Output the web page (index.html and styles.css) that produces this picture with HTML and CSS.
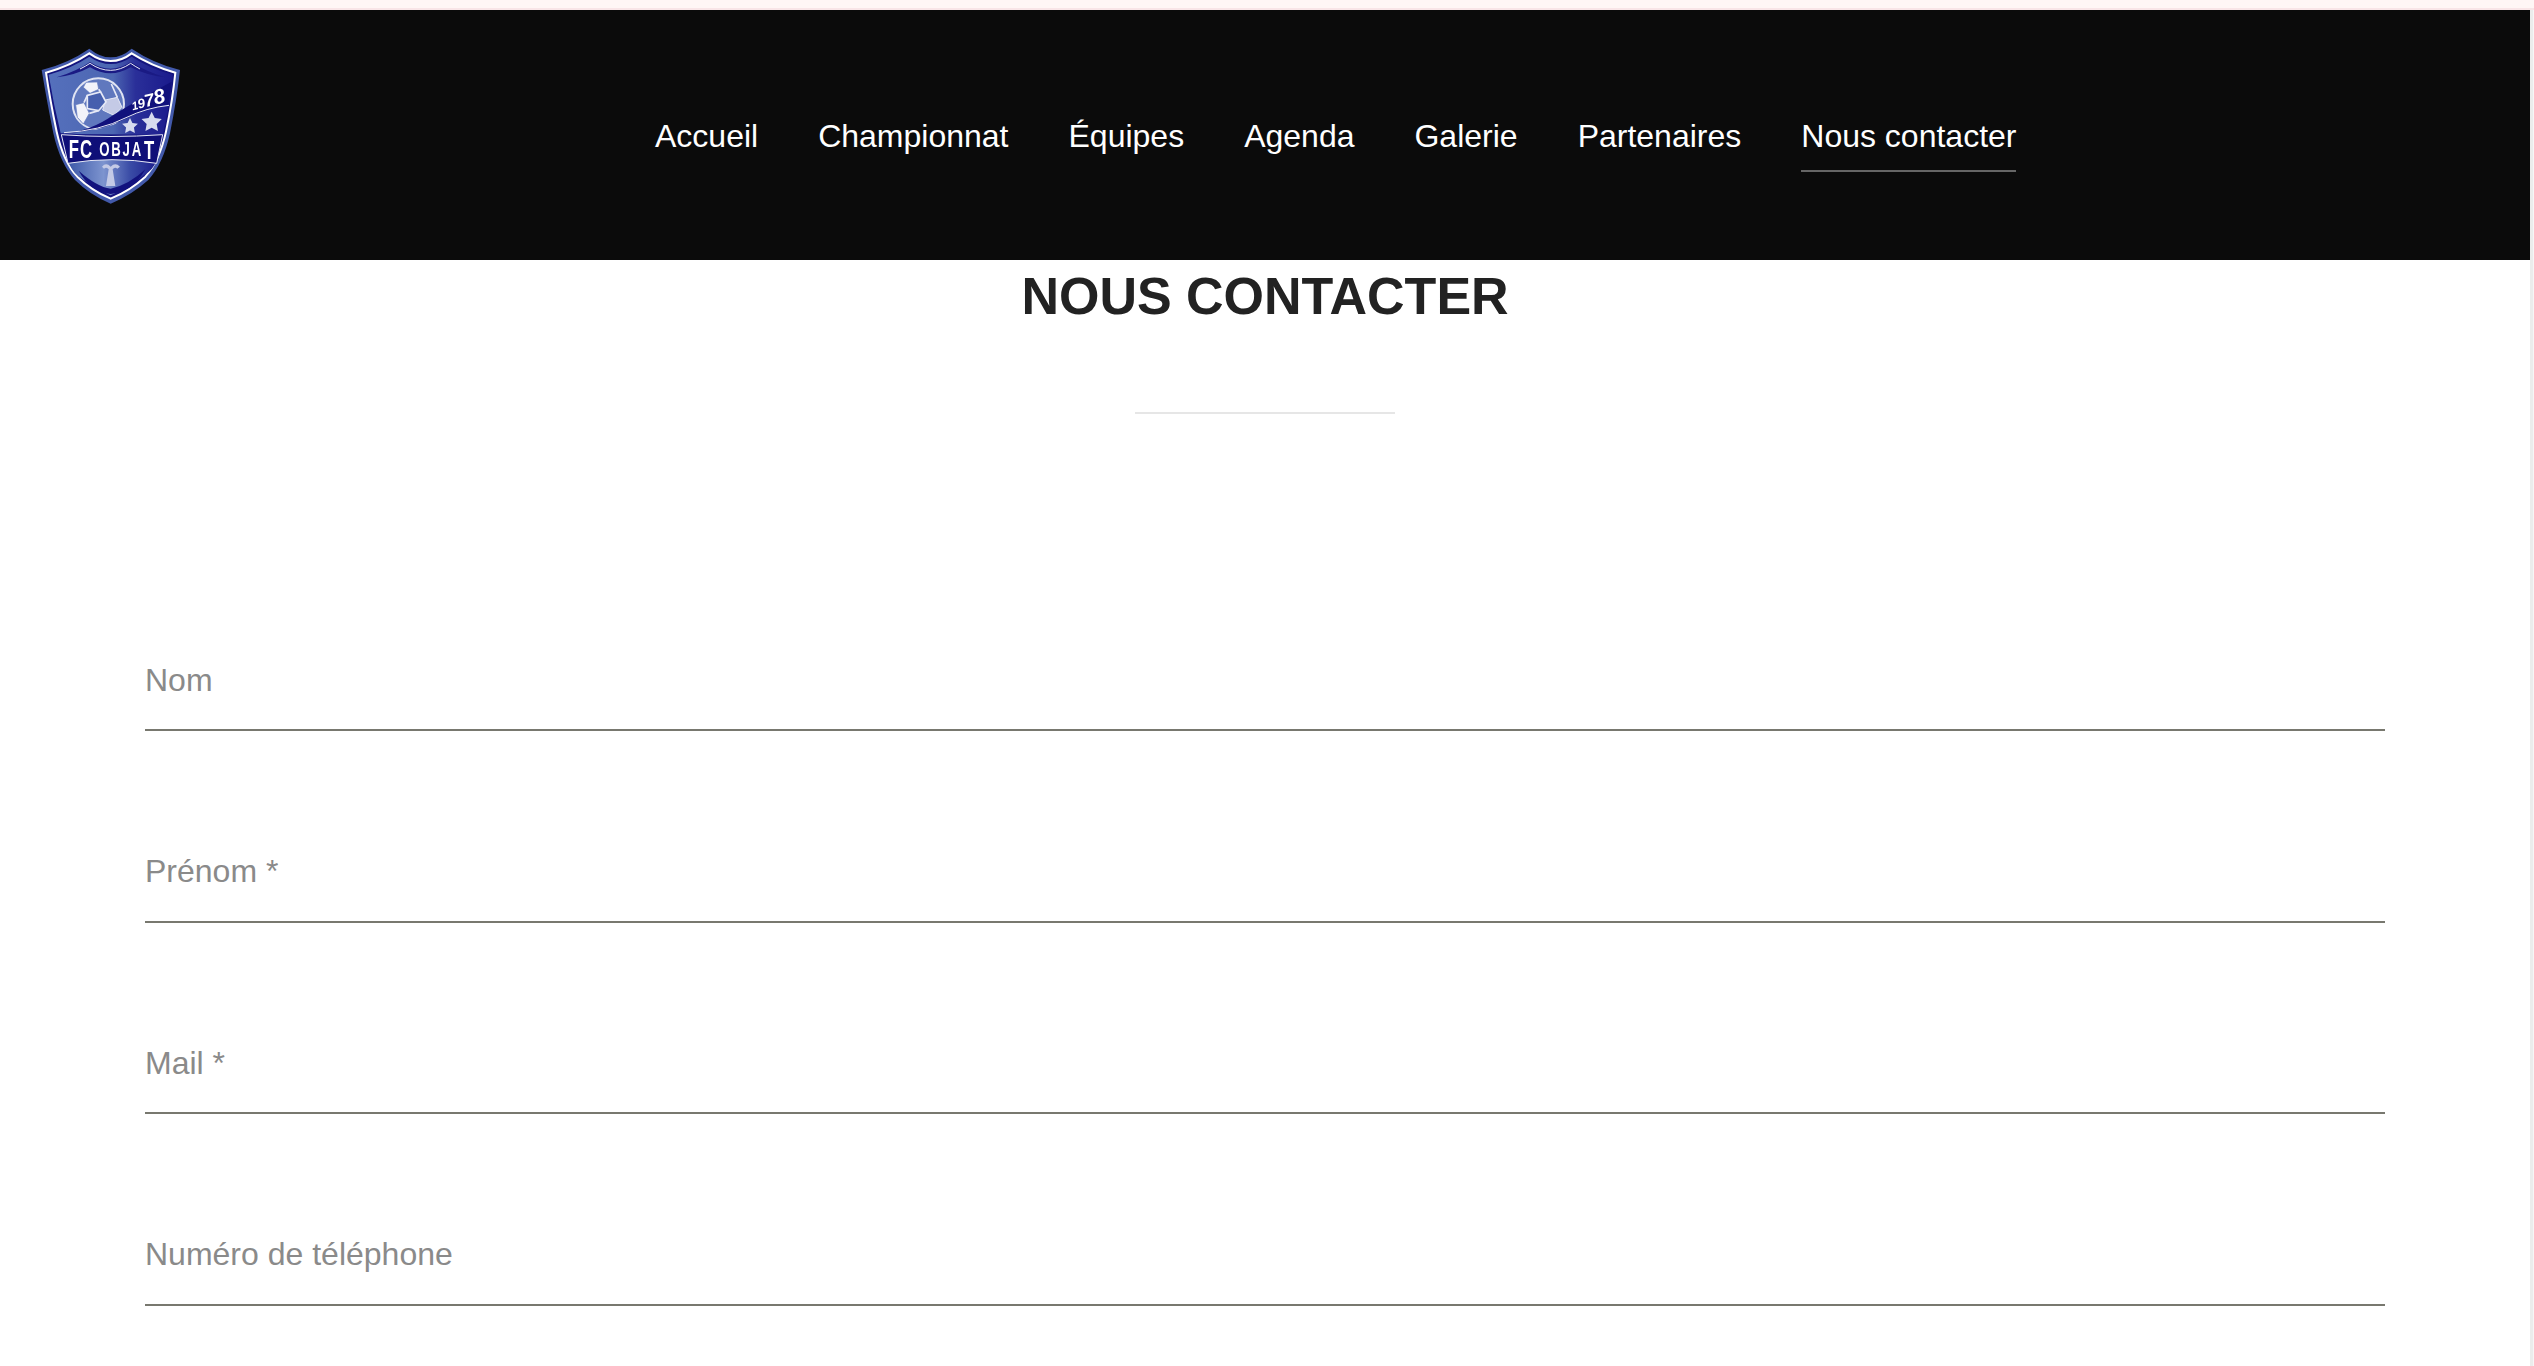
FILE: index.html
```html
<!DOCTYPE html>
<html lang="fr">
<head>
    <meta charset="UTF-8">
    <title>Nous contacter - FC Objat</title>
    <link rel="stylesheet" href="styles.css">
</head>
<body>

<div class="top-strip"></div>

<div class="page">
    <div class="content">
        <header class="site-header">
            <a class="logo" href="#">
                <svg class="logo-img" viewBox="120 141 426 474" aria-label="FC Objat">
                    <defs>
                        <linearGradient id="fieldFill" gradientUnits="userSpaceOnUse" x1="146" y1="0" x2="518" y2="0">
                            <stop offset="0" stop-color="#5570bc"/>
                            <stop offset="0.52" stop-color="#4c66b2"/>
                            <stop offset="0.7" stop-color="#2a2f99"/>
                            <stop offset="1" stop-color="#1a1a8c"/>
                        </linearGradient>
                        <linearGradient id="footFill" gradientUnits="userSpaceOnUse" x1="204" y1="0" x2="470" y2="0">
                            <stop offset="0" stop-color="#3c58a8"/>
                            <stop offset="0.4" stop-color="#7d94cf"/>
                            <stop offset="0.7" stop-color="#3a4ca6"/>
                            <stop offset="1" stop-color="#1c1e8c"/>
                        </linearGradient>
                        <polygon id="star" points="0,-1 .29,-.4 .951,-.309 .47,.15 .588,.809 0,.5 -.588,.809 -.47,.15 -.951,-.309 -.29,-.4"/>
                    </defs>
                    <!-- shield -->
                    <path fill="#4259aa" d="M125 210 Q205 190 268 146 Q300 172 332 172 Q365 172 395 146 Q460 190 540 210 Q530 300 510 400 Q490 490 445 540 Q395 585 332 611 Q270 585 225 540 Q180 490 160 400 Q140 300 125 210Z"/>
                    <path fill="#14147e" stroke="#fff" stroke-width="6" d="M138 218 Q210 198 268 160 Q300 183 332 183 Q365 183 395 160 Q455 198 526 218 Q518 300 498 395 Q478 485 436 530 Q390 572 332 596 Q275 572 232 530 Q190 485 170 395 Q150 300 138 218Z"/>
                    <path fill="url(#fieldFill)" d="M146 224 Q212 206 268 170 Q300 192 332 192 Q365 192 395 170 Q450 206 518 224 L510 300 L488 400 L182 400 Q160 310 146 224Z"/>
                    <!-- top crescent -->
                    <path fill="#1a1a84" d="M170 232 Q230 214 270 186 Q300 206 332 206 Q362 206 392 186 Q440 215 495 232 Q440 226 392 202 Q360 220 332 220 Q300 220 270 202 Q225 226 170 232Z"/>
                    <path fill="none" stroke="#e6e9f7" stroke-width="3" d="M240 207 Q258 198 270 190 Q300 211 332 211 Q362 211 392 190 Q405 199 420 207"/>
                    <!-- ball -->
                    <circle cx="295" cy="312" r="77" fill="#6078be" stroke="#dfe3f2" stroke-width="6"/>
                    <g fill="#f2f3fa" stroke="#6078be" stroke-width="2">
                        <path d="M258 247 L292 246 L296 268 L270 280 L250 262Z"/>
                        <path d="M227 314 L252 308 L268 340 L250 372 L232 352Z"/>
                    </g>
                    <path fill="#c4cae6" stroke="#e6e9f6" stroke-width="3" d="M316 300 L352 292 L366 322 L342 346 L308 330Z"/>
                    <path fill="#465fae" stroke="#e6e9f6" stroke-width="5" d="M262 286 L302 276 L318 306 L296 332 L262 326Z"/>
                    <g fill="none" stroke="#e6e9f6" stroke-width="5">
                        <path d="M296 268 L302 276 M352 292 L334 252 M262 286 L252 308 M268 340 L296 332 M342 346 L340 385"/>
                    </g>
                    <!-- banner -->
                    <path fill="#11117c" d="M190 400 Q270 395 340 345 Q420 295 515 245 L506 316 Q440 325 380 355 Q300 395 190 400Z"/>
                    <path fill="url(#fieldFill)" d="M190 402 Q300 397 380 357 Q440 327 505 319 L488 404Z"/>
                    <path fill="none" stroke="#e5e8f6" stroke-width="3" d="M192 398 Q300 393 378 353 Q440 323 507 316"/>
                    <text class="logo-year" transform="translate(398 331) rotate(-14)"><tspan font-size="34">1</tspan><tspan font-size="40">9</tspan><tspan font-size="52">7</tspan><tspan font-size="62">8</tspan></text>
                    <use href="#star" transform="translate(390 379) scale(25)" fill="#d7dbef"/>
                    <use href="#star" transform="translate(455 367) scale(32)" fill="#d7dbef"/>
                    <!-- foot of the shield -->
                    <path fill="url(#footFill)" d="M204 482 Q330 470 470 482 Q458 510 436 522 Q390 560 332 586 Q275 560 232 526 Q214 510 204 482Z"/>
                    <path fill="#12127e" d="M236 512 Q290 560 332 566 Q385 556 436 508 Q400 575 332 582 Q270 575 236 512Z"/>
                    <path fill="#c4cae6" d="M306 500 Q318 486 332 500 Q346 486 360 500 L352 506 Q344 500 338 508 L346 558 L318 558 L326 508 Q320 500 312 506Z"/>
                    <!-- name band -->
                    <path fill="#0f0f78" stroke="#e5e8f6" stroke-width="3" d="M184 404 Q330 415 488 404 L470 490 Q335 468 204 490Z"/>
                    <text class="logo-name" transform="translate(206 0) scale(.66 1)"><tspan class="logo-name-big" x="0" y="475">FC</tspan><tspan class="logo-name-small" x="139" y="467">OBJA</tspan><tspan class="logo-name-big" x="342" y="477">T</tspan></text>
                </svg>
            </a>
            <nav class="main-nav">
                <a href="#">Accueil</a>
                <a href="#">Championnat</a>
                <a href="#">Équipes</a>
                <a href="#">Agenda</a>
                <a href="#">Galerie</a>
                <a href="#">Partenaires</a>
                <a href="#" class="active">Nous contacter</a>
            </nav>
        </header>

        <main class="contact">
            <h1>NOUS CONTACTER</h1>
            <div class="title-rule"></div>

            <form class="contact-form">
                <input type="text" placeholder="Nom">
                <input type="text" placeholder="Prénom *">
                <input type="email" placeholder="Mail *">
                <input type="tel" placeholder="Numéro de téléphone">
            </form>
        </main>
    </div>
    <div class="scroll-track"></div>
</div>

</body>
</html>
```

FILE: styles.css
```css
* {
    box-sizing: border-box;
}
html, body {
    height: 100%;
}
body {
    font-family: 'Liberation Sans', Arial, sans-serif;
    background: #fff;
    margin: 0;
    overflow: hidden;
    display: flex;
    flex-direction: column;
}
.top-strip {
    height: 10px;
    background: #fff6f5;
    border-bottom: 2px solid #f9e5e7;
}
.page {
    flex: 1;
    display: flex;
    min-height: 0;
}
.content {
    flex: 1;
    min-width: 0;
}
.scroll-track {
    width: 4px;
    background: #ececec;
    border-right: 1px solid #f6f6f6;
}

/* header */
.site-header {
    height: 250px;
    background: #0b0b0b;
    display: flex;
    align-items: flex-start;
    padding: 37px 0 0 40px;
}
.logo {
    display: block;
    line-height: 0;
}
.logo-img {
    width: 142px;
    height: 158px;
    filter: blur(0.4px);
}
.logo-year {
    font-family: 'Liberation Sans', sans-serif;
    font-style: italic;
    font-weight: bold;
    fill: #fff;
}
.logo-name {
    font-family: 'Liberation Sans', sans-serif;
    font-weight: bold;
    fill: #fff;
}
.logo-name-big {
    font-size: 76px;
    letter-spacing: 5px;
}
.logo-name-small {
    font-size: 60px;
    letter-spacing: 8px;
}
.main-nav {
    display: flex;
    gap: 60px;
    margin-left: 473px;
    padding-top: 71px;
}
.main-nav a {
    color: #fff;
    text-decoration: none;
    font-size: 32px;
    line-height: 37px;
    height: 54px;
    border-bottom: 2px solid transparent;
}
.main-nav a.active {
    border-bottom-color: #666;
}

/* contact form */
.contact {
    padding: 0 145px;
}
.contact h1 {
    margin: 0;
    padding-top: 5px;
    text-align: center;
    color: #222;
    font-size: 52px;
    line-height: 62px;
    font-weight: bold;
}
.title-rule {
    width: 260px;
    height: 2px;
    background: #e6e6e6;
    margin: 85px auto 0;
}
.contact-form {
    display: flex;
    flex-direction: column;
    gap: 105.67px;
    padding-top: 231px;
}
.contact-form input {
    display: block;
    width: 100%;
    height: 86px;
    padding: 0 0 14px;
    border: none;
    border-bottom: 2px solid #78786f;
    border-radius: 0;
    outline: none;
    background: transparent;
    font-family: inherit;
    font-size: 32px;
    color: #222;
}
.contact-form input::placeholder {
    color: #8a8a8a;
    opacity: 1;
}
```
